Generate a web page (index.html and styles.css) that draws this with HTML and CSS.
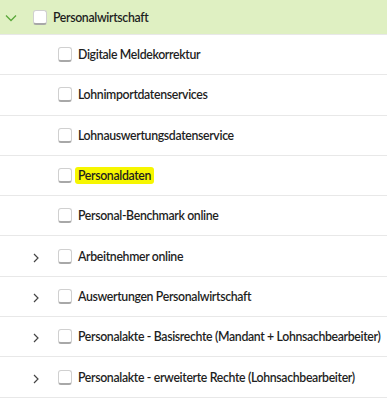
FILE: index.html
```html
<!DOCTYPE html>
<html>
<head>
<meta charset="utf-8">
<link rel="stylesheet" href="styles.css">
</head>
<body>
<div class="tree">
  <div class="row head">
    <span class="toggle"><svg width="12" height="8" viewBox="0 0 12 8"><path d="M1 1.5 L6 6.5 L11 1.5" fill="none" stroke="#5aa83a" stroke-width="1.3"/></svg></span>
    <span class="cb"></span>
    <span class="label">Personalwirtschaft</span>
  </div>
  <div class="row child"><span class="toggle"></span><span class="cb"></span><span class="label">Digitale Meldekorrektur</span></div>
  <div class="row child"><span class="toggle"></span><span class="cb"></span><span class="label">Lohnimportdatenservices</span></div>
  <div class="row child"><span class="toggle"></span><span class="cb"></span><span class="label">Lohnauswertungsdatenservice</span></div>
  <div class="row child"><span class="toggle"></span><span class="cb"></span><span class="label mark">Personaldaten</span></div>
  <div class="row child"><span class="toggle"></span><span class="cb"></span><span class="label">Personal-Benchmark online</span></div>
  <div class="row child"><span class="toggle"><svg width="6" height="10" viewBox="0 0 6 10"><path d="M1 1 L5 5 L1 9" fill="none" stroke="#444" stroke-width="1.2"/></svg></span><span class="cb"></span><span class="label">Arbeitnehmer online</span></div>
  <div class="row child"><span class="toggle"><svg width="6" height="10" viewBox="0 0 6 10"><path d="M1 1 L5 5 L1 9" fill="none" stroke="#444" stroke-width="1.2"/></svg></span><span class="cb"></span><span class="label">Auswertungen Personalwirtschaft</span></div>
  <div class="row child"><span class="toggle"><svg width="6" height="10" viewBox="0 0 6 10"><path d="M1 1 L5 5 L1 9" fill="none" stroke="#444" stroke-width="1.2"/></svg></span><span class="cb"></span><span class="label">Personalakte - Basisrechte (Mandant + Lohnsachbearbeiter)</span></div>
  <div class="row child"><span class="toggle"><svg width="6" height="10" viewBox="0 0 6 10"><path d="M1 1 L5 5 L1 9" fill="none" stroke="#444" stroke-width="1.2"/></svg></span><span class="cb"></span><span class="label">Personalakte - erweiterte Rechte (Lohnsachbearbeiter)</span></div>
</div>
</body>
</html>
```
FILE: styles.css
```css
html, body {
  margin: 0;
  padding: 0;
  background: #fff;
}
body {
  font-family: "Lato", "Noto Sans", sans-serif;
  font-size: 12.3px;
  font-weight: 600;
  letter-spacing: -0.35px;
  color: #1e1e1e;
}
.tree {
  display: flex;
  flex-direction: column;
}
.row {
  display: flex;
  align-items: center;
  height: 39.3px;
  border-bottom: 1px solid #e8e8e8;
  box-sizing: content-box;
  white-space: nowrap;
}
.row.head {
  height: 34px;
  background: #dff0c2;
  padding-left: 5px;
}
.row.child {
  padding-left: 33px;
}
.toggle {
  display: flex;
  align-items: center;
  justify-content: flex-start;
  flex-shrink: 0;
}
.head .toggle {
  width: 28px;
  margin-top: 2px;
}
.child .toggle {
  width: 25px;
  margin-top: 3px;
}
.cb {
  flex-shrink: 0;
  width: 12px;
  height: 12px;
  border: 1px solid #d0d0d0;
  border-bottom: 2px solid #a8a8a8;
  border-radius: 3px;
  background: #fff;
  margin-right: 6px;
}
.label.mark {
  background: #f6f600;
  border-radius: 3px;
  padding: 1px 3px;
  margin-left: -3px;
}
```
